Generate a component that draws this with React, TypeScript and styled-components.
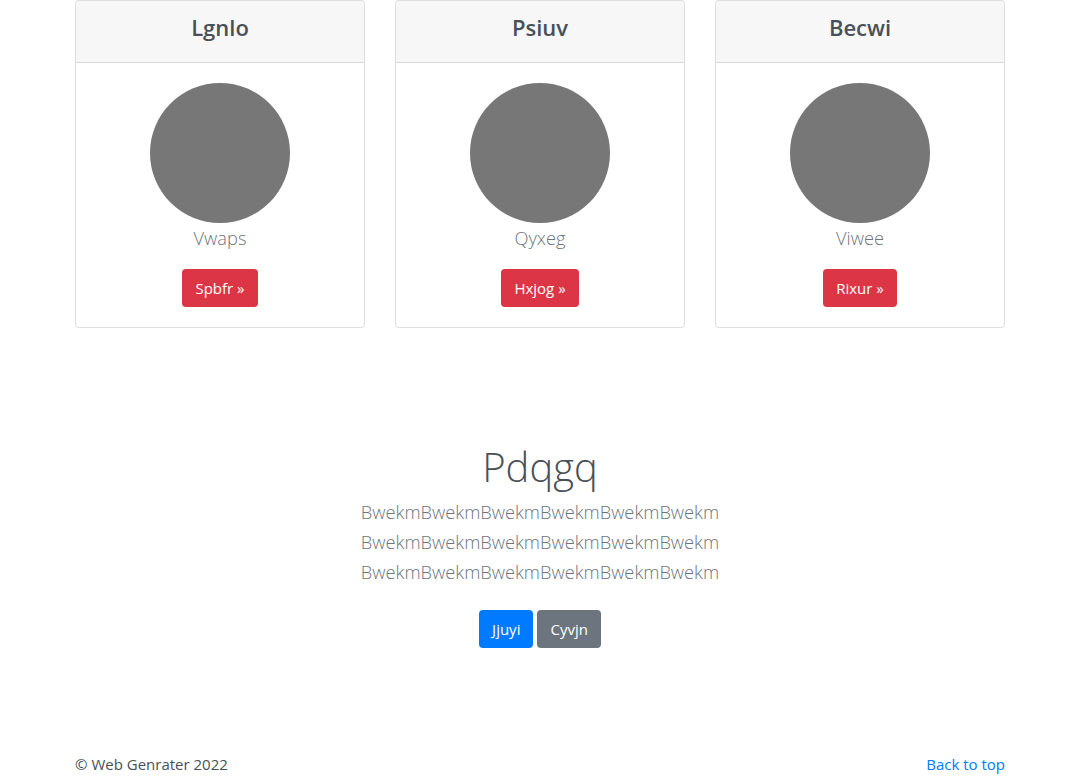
import React from 'react';
import styled, { createGlobalStyle } from 'styled-components';

const GlobalStyle = createGlobalStyle`
  html, body {
    margin: 0;
    padding: 0;
    background: #fff;
  }
  body {
    font-family: 'Open Sans', 'Noto Sans', 'Liberation Sans', sans-serif;
    font-size: 16px;
    line-height: 1.5;
    color: #212529;
  }
  * {
    box-sizing: border-box;
  }
`;

const Container = styled.div`
  width: 930px;
  margin: 0 auto;
`;

const CardDeck = styled.div`
  display: flex;
  gap: 30px;
`;

const Card = styled.div`
  flex: 1;
  border: 1px solid rgba(0, 0, 0, 0.125);
  border-radius: 4px;
  background: #fff;
  text-align: center;
  overflow: hidden;
`;

const CardHeader = styled.div`
  padding: 12px 20px 20px;
  background: #f7f7f7;
  border-bottom: 1px solid rgba(0, 0, 0, 0.125);
  h4 {
    margin: 0;
    font-size: 22px;
    font-weight: 600;
    line-height: 29px;
    color: #495057;
  }
`;

const CardBody = styled.div`
  padding: 20px 20px 20px;
  display: flex;
  flex-direction: column;
  align-items: center;
`;

const Avatar = styled.div`
  width: 140px;
  height: 140px;
  border-radius: 50%;
  background: #777777;
`;

const Lead = styled.p`
  margin: 0;
  font-size: 18.3px;
  font-weight: 300;
  line-height: 30px;
  color: #6c757d;
`;

const Button = styled.button<{ $variant: 'danger' | 'primary' | 'secondary' }>`
  font-family: inherit;
  font-size: 15px;
  line-height: 24px;
  padding: 6px 12px;
  border: 1px solid transparent;
  border-radius: 4px;
  color: #fff;
  cursor: pointer;
  background: ${(p) =>
    p.$variant === 'danger' ? '#dc3545' : p.$variant === 'primary' ? '#007bff' : '#6c757d'};
`;

const CardButton = styled(Button)`
  margin-top: 16px;
`;

const Hero = styled.section`
  padding: 115px 0 0;
  text-align: center;
  h1 {
    margin: 0 0 6px;
    font-size: 40px;
    font-weight: 300;
    line-height: 48px;
    color: #495057;
  }
`;

const Actions = styled.div`
  margin-top: 23px;
  display: flex;
  justify-content: center;
  gap: 4px;
`;

const Footer = styled.footer`
  margin-top: 104px;
  display: flex;
  justify-content: space-between;
  color: #495057;
  font-size: 15px;
  line-height: 24px;
  a {
    color: #007bff;
    text-decoration: none;
  }
`;

const cards = [
  { title: 'Lgnlo', name: 'Vwaps', action: 'Spbfr' },
  { title: 'Psiuv', name: 'Qyxeg', action: 'Hxjog' },
  { title: 'Becwi', name: 'Viwee', action: 'Rixur' },
];

const line = 'BwekmBwekmBwekmBwekmBwekmBwekm';

export default function App() {
  return (
    <>
      <GlobalStyle />
      <Container>
        <CardDeck>
          {cards.map((c) => (
            <Card key={c.title}>
              <CardHeader>
                <h4>{c.title}</h4>
              </CardHeader>
              <CardBody>
                <Avatar />
                <Lead>{c.name}</Lead>
                <CardButton $variant="danger">{c.action} &raquo;</CardButton>
              </CardBody>
            </Card>
          ))}
        </CardDeck>

        <Hero>
          <h1>Pdqgq</h1>
          <Lead>{line}</Lead>
          <Lead>{line}</Lead>
          <Lead>{line}</Lead>
          <Actions>
            <Button $variant="primary">Jjuyi</Button>
            <Button $variant="secondary">Cyvjn</Button>
          </Actions>
        </Hero>

        <Footer>
          <span>&copy; Web Genrater 2022</span>
          <a href="#">Back to top</a>
        </Footer>
      </Container>
    </>
  );
}
